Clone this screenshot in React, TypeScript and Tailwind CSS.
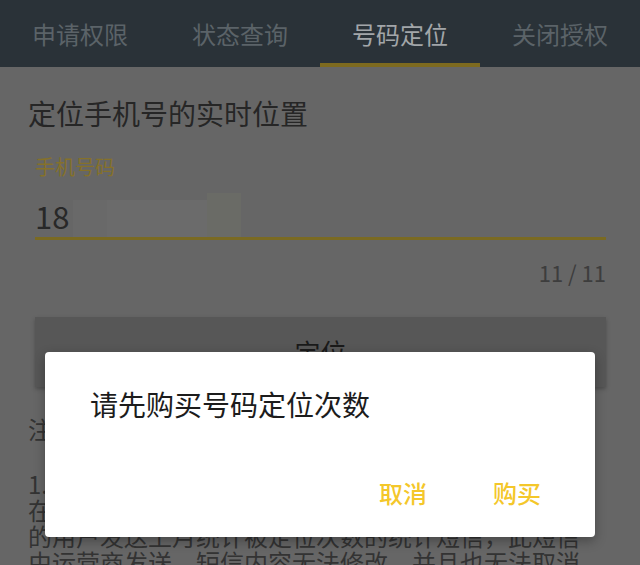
const tabs = ['申请权限', '状态查询', '号码定位', '关闭授权'];

const App = () => {
  return (
    <div
      className="relative h-[565px] w-[640px] overflow-hidden bg-[#666666]"
      style={{ fontFamily: '"Noto Sans CJK SC", "Noto Sans", sans-serif' }}
    >
      {/* tab bar */}
      <div className="flex h-[67px] bg-[#2a3238]">
        {tabs.map((tab, i) => (
          <div key={tab} className="relative flex flex-1 items-center justify-center">
            <span
              className={
                i === 2
                  ? 'text-[24px] leading-none text-[#a2a6a9]'
                  : 'text-[24px] leading-none text-[#5b6368]'
              }
            >
              {tab}
            </span>
            {i === 2 && <div className="absolute bottom-0 left-0 right-0 h-[4px] bg-[#7d6a1f]" />}
          </div>
        ))}
      </div>

      <div className="px-[28px]">
        <h1 className="mt-[28px] text-[28px] leading-[36px] text-[#262626]">定位手机号的实时位置</h1>

        <div className="mt-[23px] pl-[7px] pr-[6px]">
          <div className="text-[20px] leading-[26px] text-[#85712a]">手机号码</div>
          <div className="mt-[13px] flex h-[44px] items-center">
            <span className="text-[31px] leading-none text-[#282828]">18</span>
            <div className="ml-[4px] flex h-full items-end">
              <div className="h-[37px] w-[34px] bg-[#696969]" />
              <div className="h-[37px] w-[100px] bg-[#6b6b6b]" />
              <div className="h-[44px] w-[34px] bg-[#6a6b66]" />
            </div>
          </div>
          <div className="h-[3px] bg-[#7a6a22]" />
          <div className="mt-[18px] text-right text-[22px] leading-[28px] text-[#3d3d3d]">11 / 11</div>

          <div className="mt-[31px] flex h-[70px] items-center justify-center bg-[#575757] shadow-[0_2px_4px_rgba(0,0,0,0.25)]">
            <span className="text-[26px] leading-none text-[#1a1a1a]">定位</span>
          </div>
        </div>

        <div className="mt-[28px] text-[24px] leading-[28px] text-[#333333]">注意：</div>
        <div className="mt-[28px] whitespace-nowrap text-[24px] leading-[26px] text-[#333333]">
          <div>1. 开通号码定位服务后，运营商将会每月</div>
          <div>在月初向被定位号码发送一条短信，向被定位</div>
          <div>的用户发送上月统计被定位次数的统计短信，此短信</div>
          <div>由运营商发送，短信内容无法修改，并且也无法取消</div>
        </div>
      </div>

      {/* dialog */}
      <div className="absolute left-[45px] top-[352px] flex h-[185px] w-[550px] flex-col rounded-[4px] bg-white shadow-[0_4px_12px_rgba(0,0,0,0.3)]">
        <div className="pl-[45px] pt-[34px] text-[28px] leading-[36px] text-[#1c1c1c]">请先购买号码定位次数</div>
        <div className="mt-auto mb-[32px] flex justify-end gap-[66px] pr-[54px]">
          <span className="text-[24px] font-medium leading-none text-[#f4c72a]">取消</span>
          <span className="text-[24px] font-medium leading-none text-[#f4c72a]">购买</span>
        </div>
      </div>
    </div>
  );
};

export default App;
